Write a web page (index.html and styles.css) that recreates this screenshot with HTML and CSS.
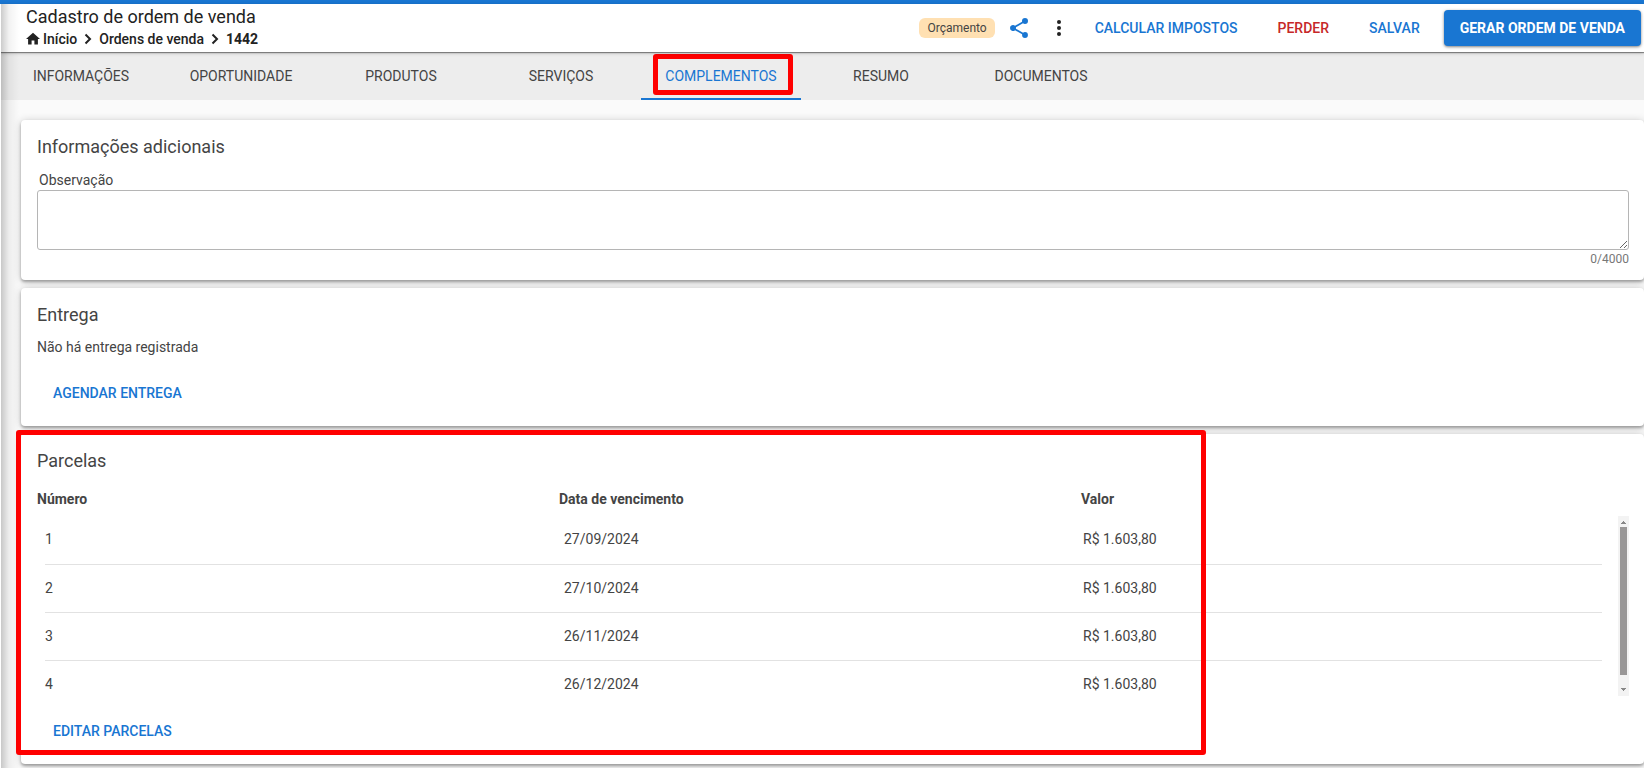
FILE: index.html
```
<!DOCTYPE html>
<html lang="pt-BR">
<head>
<meta charset="utf-8">
<title>Cadastro de ordem de venda</title>
<link rel="stylesheet" href="styles.css">
</head>
<body>
<div class="page">

<header class="topo">
  <div class="titulo">
    <h1>Cadastro de ordem de venda</h1>
    <nav class="trilha" aria-label="Navegação">
      <a href="#"><svg class="casa" viewBox="2 2 20 20"><path d="M10 20v-6h4v6h5v-8h3L12 3 2 12h3v8z"/></svg>Início</a>
      <svg class="seta" viewBox="0 0 8 12"><path d="M1.5 1.5 6 6 1.5 10.5"/></svg>
      <a href="#">Ordens de venda</a>
      <svg class="seta" viewBox="0 0 8 12"><path d="M1.5 1.5 6 6 1.5 10.5"/></svg>
      <a href="#" class="atual">1442</a>
    </nav>
  </div>
  <div class="acoes">
    <div class="situacao">
      <span class="status">Orçamento</span>
      <button class="icone azul" aria-label="Compartilhar">
        <svg viewBox="0 0 24 24"><path d="M18 16.08c-.76 0-1.44.3-1.96.77L8.91 12.7c.05-.23.09-.46.09-.7s-.04-.47-.09-.7l7.05-4.11c.54.5 1.25.81 2.04.81a3 3 0 1 0-3-3c0 .24.04.47.09.7L8.04 9.81A2.99 2.99 0 0 0 3 12a3 3 0 0 0 5.04 2.19l7.12 4.16c-.05.21-.08.43-.08.65a2.92 2.92 0 1 0 2.92-2.92z"/></svg>
      </button>
      <button class="icone" aria-label="Mais opções">
        <svg viewBox="0 0 24 24"><circle cx="12" cy="6" r="2"/><circle cx="12" cy="12" r="2"/><circle cx="12" cy="18" r="2"/></svg>
      </button>
    </div>
    <button class="btn">CALCULAR IMPOSTOS</button>
    <button class="btn perder">PERDER</button>
    <button class="btn">SALVAR</button>
    <button class="btn cheio">GERAR ORDEM DE VENDA</button>
  </div>
</header>

<nav class="abas">
  <a href="#">INFORMAÇÕES</a>
  <a href="#">OPORTUNIDADE</a>
  <a href="#">PRODUTOS</a>
  <a href="#">SERVIÇOS</a>
  <a href="#" class="ativa">COMPLEMENTOS<span class="marca marca-aba"></span></a>
  <a href="#">RESUMO</a>
  <a href="#">DOCUMENTOS</a>
</nav>

<main class="conteudo">
  <section class="card">
    <h2>Informações adicionais</h2>
    <label for="obs">Observação</label>
    <textarea id="obs" maxlength="4000"></textarea>
    <div class="contador">0/4000</div>
  </section>

  <section class="card">
    <h2>Entrega</h2>
    <p>Não há entrega registrada</p>
    <button class="btn">AGENDAR ENTREGA</button>
  </section>

  <section class="card">
    <h2>Parcelas</h2>
    <div class="lista">
      <table>
        <thead>
          <tr><th>Número</th><th>Data de vencimento</th><th>Valor</th></tr>
        </thead>
        <tbody>
          <tr><td>1</td><td>27/09/2024</td><td>R$ 1.603,80</td></tr>
          <tr><td>2</td><td>27/10/2024</td><td>R$ 1.603,80</td></tr>
          <tr><td>3</td><td>26/11/2024</td><td>R$ 1.603,80</td></tr>
          <tr><td>4</td><td>26/12/2024</td><td>R$ 1.603,80</td></tr>
        </tbody>
      </table>
      <!-- barra de rolagem da lista -->
      <div class="rolagem">
        <svg viewBox="0 0 5 3"><path d="M2 0h1v1h1v1h1v1H0V2h1V1h1z"/></svg>
        <div class="polegar"></div>
        <svg viewBox="0 0 5 3"><path d="M0 0h5v1H4v1H3v1H2V2H1V1H0z"/></svg>
      </div>
    </div>
    <button class="btn">EDITAR PARCELAS</button>
    <span class="marca marca-parcelas"></span>
  </section>
</main>

</div>
</body>
</html>
```
FILE: styles.css
```
* {
  box-sizing: border-box;
}

body {
  margin: 0;
  font: 14px/20px Roboto, sans-serif;
  color: #444;
  background: #fafafa;
  overflow: hidden;
}

h1, h2, p {
  margin: 0;
  font-weight: 400;
}

a {
  color: inherit;
  text-decoration: none;
}

.page {
  position: relative;
  min-height: 100vh;
  border-top: 4px solid #1976d2;
}

/* sombra do menu lateral */
.page::before {
  content: "";
  position: absolute;
  top: 0;
  bottom: 0;
  left: 0;
  width: 18px;
  border-left: 1px solid #fff;
  background: linear-gradient(to right, rgba(0,0,0,.2), rgba(0,0,0,.05) 8px, transparent);
  z-index: 3;
  pointer-events: none;
}

.topo {
  position: relative;
  z-index: 2;
  display: flex;
  justify-content: space-between;
  align-items: center;
  height: 48px;
  padding: 0 3px 0 26px;
  background: #fff;
  color: #222;
  box-shadow: 0 1px 1px rgba(0,0,0,.4), 0 1px 4px rgba(0,0,0,.2);
}

.titulo {
  padding-bottom: 2px;
}

.topo h1 {
  font-size: 18px;
  line-height: 24px;
}

.trilha {
  display: flex;
  align-items: center;
  gap: 7px;
  font-weight: 500;
}

.trilha a {
  display: flex;
  align-items: center;
  gap: 3px;
}

.trilha .atual {
  font-weight: 700;
}

.casa {
  width: 14px;
  height: 14px;
  fill: #222;
}

.seta {
  width: 8px;
  height: 12px;
  fill: none;
  stroke: #222;
  stroke-width: 2;
}

.acoes, .situacao {
  display: flex;
  align-items: center;
}

.situacao {
  gap: 8px;
  margin-right: 4px;
}

.acoes .btn + .btn {
  margin-left: 8px;
}

.status {
  padding: 0 8px;
  border-radius: 6px;
  background: #ffe0b2;
  color: #444;
  font-size: 12px;
}

.icone {
  width: 32px;
  height: 32px;
  padding: 4px;
  border: 0;
  background: none;
  fill: #222;
}

.icone svg {
  display: block;
  width: 24px;
  height: 24px;
}

.azul {
  fill: #1976d2;
}

.btn {
  height: 36px;
  padding: 0 16px;
  border: 0;
  border-radius: 4px;
  background: none;
  color: #1976d2;
  font: 500 14px/20px Roboto, sans-serif;
}

.perder {
  color: #c62828;
}

.cheio {
  background: #1976d2;
  color: #fff;
  font-weight: 700;
  box-shadow: 0 1px 3px rgba(0,0,0,.5);
}

.abas {
  display: flex;
  height: 48px;
  padding-left: 1px;
  background: #ededed;
}

.abas a {
  position: relative;
  width: 160px;
  line-height: 48px;
  text-align: center;
}

.abas .ativa {
  color: #1976d2;
  border-bottom: 2px solid #1976d2;
}

.marca {
  position: absolute;
  border: 5px solid #f00;
  border-radius: 3px;
  pointer-events: none;
}

.marca-aba {
  top: 2px;
  bottom: 3px;
  left: 12px;
  right: 8px;
}

.marca-parcelas {
  top: -4px;
  bottom: 9px;
  left: -5px;
  right: 27%;
}

.conteudo {
  display: flex;
  flex-direction: column;
  gap: 8px;
  padding: 20px 0 20px 21px;
}

.card {
  position: relative;
  padding: 16px 15px 15px 16px;
  border-radius: 4px;
  background: #fff;
  box-shadow: 0 2px 3px rgba(0,0,0,.3), 0 1px 8px rgba(0,0,0,.2);
}

.card h2 {
  margin-bottom: 11px;
  font-size: 18px;
  line-height: 22px;
}

.card label {
  display: block;
  padding: 1px 2px 0;
}

.card textarea {
  display: block;
  width: 100%;
  height: 60px;
  border: 1px solid #b5b5b5;
  border-radius: 3px;
}

.contador {
  color: #777;
  font-size: 12px;
  text-align: right;
  line-height: 12px;
  padding-top: 3px;
}

.card .btn {
  display: block;
  margin-top: 18px;
}

.card .lista + .btn {
  margin-top: 17px;
}

.lista {
  display: flex;
}

table, tbody, thead {
  display: block;
}

table {
  flex: 1;
}

tr {
  display: grid;
  grid-template-columns: repeat(3, 1fr);
}

th, td {
  padding: 0;
  text-align: left;
}

thead tr {
  margin-right: 15px;
  height: 33px;
  padding-top: 6px;
}

tbody {
  height: 180px;
  padding: 0 16px 0 8px;
  overflow: hidden;
}

tbody tr {
  height: 48px;
  line-height: 47px;
}

tbody tr + tr {
  border-top: 1px solid #e2e2e2;
}

.rolagem {
  display: flex;
  flex-direction: column;
  align-items: center;
  width: 11px;
  margin-top: 33px;
  padding: 5px 0;
  background: #f3f3f3;
}

.rolagem svg {
  width: 5px;
  height: 3px;
  fill: #888;
}

.polegar {
  width: 7px;
  height: 148px;
  margin: 3px 0 auto;
  background: #999797;
}
```
